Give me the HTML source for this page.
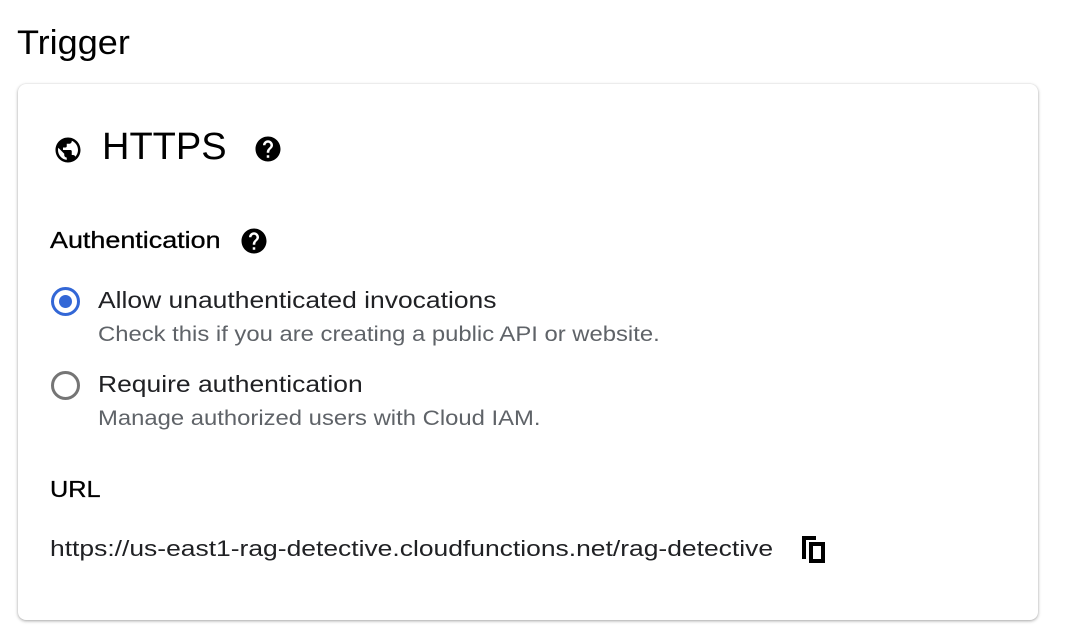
<!DOCTYPE html>
<html><head><style>
body{margin:0;width:1086px;height:634px;background:#fff;font-family:"Liberation Sans",sans-serif;color:#000;position:relative;overflow:hidden}
.a{position:absolute;white-space:nowrap;transform-origin:0 0}
.card{position:absolute;left:18px;top:84px;width:1020px;height:536px;border-radius:8px;background:#fff;box-shadow:0 1px 3px rgba(0,0,0,.35),0 0 1px rgba(0,0,0,.1)}
.sub{color:#5f6368;font-size:21px}
.lab{font-size:23px;color:#202124}
.radio{position:absolute;width:26px;height:26px;border-radius:50%;box-sizing:border-box}
</style></head><body>
<div class="a" style="left:17px;top:24px;font-size:34px;transform:scaleX(1.06)">Trigger</div>
<div class="card"></div>
<svg class="a" style="left:53px;top:135px" width="30" height="30" viewBox="0 0 24 24"><path d="M12 2C6.48 2 2 6.48 2 12s4.48 10 10 10 10-4.48 10-10S17.52 2 12 2zm-1 17.93c-3.95-.49-7-3.85-7-7.93 0-.62.08-1.21.21-1.790L9 15v1c0 1.1.9 2 2 2v1.93zm6.9-2.54c-.26-.81-1-1.39-1.9-1.39h-1v-3c0-.55-.45-1-1-1H8v-2h2c.55 0 1-.45 1-1V7h2c1.1 0 2-.9 2-2v-.41c2.93 1.19 5 4.06 5 7.410 0 2.08-.8 3.97-2.1 5.39z"/></svg>
<div class="a" style="left:102px;top:126px;font-size:38px">HTTPS</div>
<svg class="a" style="left:253px;top:134px" width="30" height="30" viewBox="0 0 24 24"><path d="M12 2C6.48 2 2 6.48 2 12s4.48 10 10 10 10-4.48 10-10S17.52 2 12 2zm1 17h-2v-2h2v2zm2.07-7.75l-.9.92C13.45 12.9 13 13.5 13 15h-2v-.5c0-1.1.45-2.1 1.170-2.83l1.24-1.26c.37-.36.59-.86.59-1.41 0-1.1-.9-2-2-2s-2 .9-2 2H8c0-2.21 1.79-4 4-4s4 1.79 4 4c0 .88-.36 1.68-.93 2.25z"/></svg>
<div class="a" style="left:50px;top:227px;font-size:23px;color:#000;transform:scaleX(1.17);-webkit-text-stroke:.3px #000">Authentication</div>
<svg class="a" style="left:239px;top:226px" width="30" height="30" viewBox="0 0 24 24"><path d="M12 2C6.48 2 2 6.48 2 12s4.48 10 10 10 10-4.48 10-10S17.52 2 12 2zm1 17h-2v-2h2v2zm2.07-7.75l-.9.92C13.45 12.9 13 13.5 13 15h-2v-.5c0-1.1.45-2.1 1.170-2.83l1.24-1.26c.37-.36.59-.86.59-1.41 0-1.1-.9-2-2-2s-2 .9-2 2H8c0-2.21 1.79-4 4-4s4 1.790 4 4c0 .88-.36 1.68-.93 2.25z"/></svg>
<div class="radio" style="left:51px;top:287px;width:29px;height:29px;border:3px solid #3367d6"><div style="position:absolute;left:5px;top:5px;width:13px;height:13px;border-radius:50%;background:#3367d6"></div></div>
<div class="a lab" style="left:98px;top:287px;transform:scaleX(1.15)">Allow unauthenticated invocations</div>
<div class="a sub" style="left:98px;top:323px;transform:scaleX(1.135)">Check this if you are creating a public API or website.</div>
<div class="radio" style="left:51px;top:371px;width:29px;height:29px;border:3px solid #757575"></div>
<div class="a lab" style="left:98px;top:371px;transform:scaleX(1.15)">Require authentication</div>
<div class="a sub" style="left:98px;top:407px;transform:scaleX(1.135)">Manage authorized users with Cloud IAM.</div>
<div class="a" style="left:50px;top:476px;font-size:23px;color:#000;transform:scaleX(1.1);-webkit-text-stroke:.3px #000">URL</div>
<div class="a" style="left:50px;top:536px;font-size:22.5px;color:#202124;transform:scaleX(1.175)">https://us-east1-rag-detective.cloudfunctions.net/rag-detective</div>
<svg class="a" style="left:800px;top:535px" width="27" height="28" viewBox="0 0 27 28"><path d="M2 1h14v4H6v19H2z M9 7h16v21H9z M13 11v13h8V11z" fill-rule="evenodd"/></svg>
</body></html>
